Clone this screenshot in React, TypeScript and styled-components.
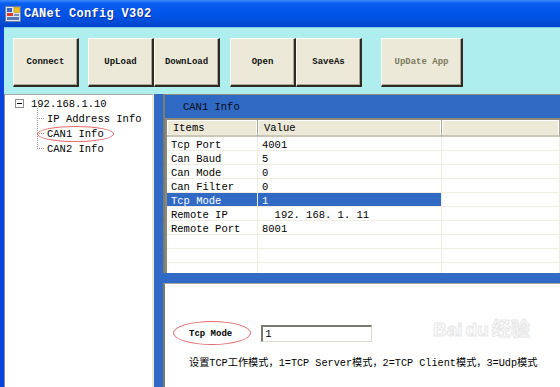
import React from 'react';
import styled, { createGlobalStyle } from 'styled-components';

const GlobalStyle = createGlobalStyle`
  html, body {
    margin: 0;
    padding: 0;
  }
  body {
    width: 560px;
    height: 387px;
    overflow: hidden;
    background: #afeeee;
    font-family: "Liberation Mono", "Noto Sans CJK SC", monospace;
    color: #000;
  }
  * {
    box-sizing: border-box;
  }
`;

const Window = styled.div`
  width: 560px;
  height: 387px;
  display: flex;
  flex-direction: column;
  overflow: hidden;
`;

const TitleBar = styled.div`
  height: 27px;
  flex: none;
  display: flex;
  align-items: center;
  gap: 3px;
  padding-left: 5px;
  background: linear-gradient(
    180deg,
    #3d8df9 0%,
    #0a5ef0 12%,
    #0056e8 45%,
    #004fdc 75%,
    #0044c6 100%
  );
`;

const TitleText = styled.span`
  font-size: 12px;
  font-weight: 700;
  color: #fff;
  text-shadow: 1px 1px 0 #0b2a9a;
  letter-spacing: 0.3px;
`;

const Frame = styled.div`
  flex: 1;
  min-height: 0;
  display: flex;
  flex-direction: column;
  border-left: 4px solid #0a44dc;
`;

const Toolbar = styled.div`
  height: 67px;
  flex: none;
  display: flex;
  align-items: flex-start;
  padding: 10px 0 0 9px;
  background: #afeeee;
  border-top: 1px solid #7ccfe8;
`;

const ToolButton = styled.button<{ $gap?: number; $width?: number; $disabled?: boolean }>`
  width: ${p => p.$width ?? 66}px;
  height: 49px;
  margin: 0 0 0 ${p => p.$gap ?? 0}px;
  padding: 0;
  background: #ece9d8;
  border-top: 1px solid #fbfaf4;
  border-left: 1px solid #fbfaf4;
  border-right: 2px solid #2f2b20;
  border-bottom: 2px solid #2f2b20;
  box-shadow: inset -1px -1px 0 #aca899;
  font-family: "Liberation Mono", monospace;
  font-size: 9px;
  font-weight: 700;
  color: ${p => (p.$disabled ? '#7c7a5c' : '#111')};
`;

const Main = styled.div`
  flex: 1;
  min-height: 0;
  display: flex;
`;

const TreePane = styled.div`
  width: 150px;
  flex: none;
  background: #fff;
  border-top: 1px solid #a6a6a6;
  border-left: 1px solid #8f8f8f;
  border-right: 2px solid #ece9d8;
  padding: 1px 0 0 5px;
  font-size: 10.5px;
`;

const TreeRow = styled.div`
  height: 15px;
  display: flex;
  align-items: center;
  white-space: nowrap;
`;

const ExpandBox = styled.span`
  width: 9px;
  height: 9px;
  margin: 0 7px 0 5px;
  border: 1px solid #8c8c8c;
  background: #fff;
  display: flex;
  align-items: center;
  justify-content: center;

  &::after {
    content: '';
    width: 5px;
    height: 1px;
    background: #000;
  }
`;

const ChildList = styled.div`
  position: relative;
  margin-left: 27px;

  &::before {
    content: '';
    position: absolute;
    left: 0;
    top: -3px;
    bottom: 7px;
    border-left: 1px dotted #9a9a9a;
  }
`;

const ChildRow = styled(TreeRow)`
  position: relative;
  padding-left: 10px;

  &::before {
    content: '';
    position: absolute;
    left: 0;
    top: 7px;
    width: 7px;
    border-top: 1px dotted #9a9a9a;
  }
`;

const NodeLabel = styled.span<{ $circled?: boolean }>`
  position: relative;

  &::after {
    content: '';
    display: ${p => (p.$circled ? 'block' : 'none')};
    position: absolute;
    left: -10px;
    right: -10px;
    top: -2px;
    bottom: -2px;
    border: 1.5px solid #e46c6c;
    border-radius: 50%;
  }
`;

const RightArea = styled.div`
  flex: 1;
  min-width: 0;
  display: flex;
  flex-direction: column;
  gap: 10px;
  padding-left: 9px;
  background: #316ac5;
`;

const TopPanel = styled.div`
  height: 179px;
  flex: none;
  display: flex;
  flex-direction: column;
  border-left: 2px solid #7d7b6c;
  border-top: 1px solid #8d8b80;
`;

const PanelHeader = styled.div`
  height: 23px;
  flex: none;
  display: flex;
  align-items: center;
  padding: 1px 0 0 18px;
  font-size: 10.5px;
  color: #0a0a14;
`;

const Grid = styled.div`
  flex: 1;
  min-height: 0;
  overflow: hidden;
  background: #fff;
  border-left: 2px solid #8c8a7c;
  border-top: 2px solid #8c8a7c;
`;

const GridRow = styled.div`
  display: grid;
  grid-template-columns: 91px 184px 1fr;
`;

const HeadCell = styled.div`
  height: 17px;
  display: flex;
  align-items: center;
  padding: 1px 0 0 6px;
  font-size: 10.5px;
  background: #ece9d8;
  border-right: 1px solid #a7a493;
  border-bottom: 2px solid #cbc7b8;
  box-shadow: inset -1px 0 0 #fff, inset 1px 1px 0 #fff;
`;

const Cell = styled.div<{ $selected?: boolean }>`
  height: 14px;
  display: flex;
  align-items: center;
  padding: 2px 0 0 4px;
  font-size: 10.5px;
  white-space: pre;
  background: ${p => (p.$selected ? '#316ac5' : '#fff')};
  color: ${p => (p.$selected ? '#fff' : '#000')};
  border-right: 1px solid #efede2;
  border-bottom: 1px solid #efede2;
`;

const BottomPanel = styled.div`
  flex: 1;
  position: relative;
  background: #fff;
  border-left: 2px solid #7d7b6c;
  border-top: 1px solid #a9a9a0;
  padding: 41px 0 0 24px;
`;

const FieldRow = styled.div`
  display: flex;
  align-items: center;
  gap: 29px;
`;

const FieldLabel = styled.span`
  position: relative;
  font-size: 9px;
  font-weight: 700;

  &::after {
    content: '';
    position: absolute;
    left: -16px;
    right: -19px;
    top: -8px;
    bottom: -6px;
    border: 1.5px solid #e46c6c;
    border-radius: 50%;
  }
`;

const FieldInput = styled.div`
  width: 111px;
  height: 17px;
  display: flex;
  align-items: center;
  padding-left: 2px;
  font-size: 10.5px;
  background: #fff;
  border-top: 2px solid #7b7a70;
  border-left: 2px solid #7b7a70;
  border-right: 1px solid #dcd9cc;
  border-bottom: 1px solid #dcd9cc;
`;

const Description = styled.div`
  margin-top: 15px;
  font-size: 10.2px;
  line-height: 14px;
  white-space: nowrap;
  font-family: "Liberation Mono", "Noto Sans CJK SC", monospace;
`;

const Watermark = styled.div`
  position: absolute;
  left: 268px;
  top: 36px;
  display: flex;
  align-items: baseline;
  gap: 3px;
  font-family: "Liberation Sans", "Noto Sans CJK SC", sans-serif;
  font-size: 19px;
  line-height: 20px;
  font-weight: 700;
  color: rgba(255, 255, 255, 0);
  -webkit-text-stroke: 1px #e6e6e6;
  pointer-events: none;
`;

const AppIcon = () => (
  <svg width="16" height="16" viewBox="0 0 16 16">
    <rect x="0.5" y="0.5" width="15" height="15" fill="#dfe6f2" stroke="#6a7fa8" />
    <rect x="2" y="2" width="5" height="4" fill="#3a63c8" />
    <rect x="9" y="1.5" width="5.5" height="5" fill="#f2c21c" stroke="#b88a10" strokeWidth="0.6" />
    <rect x="2" y="7" width="6" height="3" fill="#e23a2a" />
    <rect x="9" y="8" width="5" height="2" fill="#7a8fb8" />
    <rect x="2" y="11" width="12" height="3" fill="#5a78b8" />
  </svg>
);

const rows = [
  { item: 'Tcp Port', value: '4001' },
  { item: 'Can Baud', value: '5' },
  { item: 'Can Mode', value: '0' },
  { item: 'Can Filter', value: '0' },
  { item: 'Tcp Mode', value: '1', selected: true },
  { item: 'Remote IP', value: '  192. 168. 1. 11' },
  { item: 'Remote Port', value: '8001' },
  { item: '', value: '' },
  { item: '', value: '' },
  { item: '', value: '' },
];

const App: React.FC = () => {
  return (
    <>
      <GlobalStyle />
      <Window>
        <TitleBar>
          <AppIcon />
          <TitleText>CANet Config V302</TitleText>
        </TitleBar>
        <Frame>
          <Toolbar>
            <ToolButton>Connect</ToolButton>
            <ToolButton $gap={9}>UpLoad</ToolButton>
            <ToolButton>DownLoad</ToolButton>
            <ToolButton $gap={10}>Open</ToolButton>
            <ToolButton>SaveAs</ToolButton>
            <ToolButton $gap={19} $width={82} $disabled>
              UpDate App
            </ToolButton>
          </Toolbar>
          <Main>
            <TreePane>
              <TreeRow>
                <ExpandBox />
                <NodeLabel>192.168.1.10</NodeLabel>
              </TreeRow>
              <ChildList>
                <ChildRow>
                  <NodeLabel>IP Address Info</NodeLabel>
                </ChildRow>
                <ChildRow>
                  <NodeLabel $circled>CAN1 Info</NodeLabel>
                </ChildRow>
                <ChildRow>
                  <NodeLabel>CAN2 Info</NodeLabel>
                </ChildRow>
              </ChildList>
            </TreePane>
            <RightArea>
              <TopPanel>
                <PanelHeader>CAN1 Info</PanelHeader>
                <Grid>
                  <GridRow>
                    <HeadCell>Items</HeadCell>
                    <HeadCell>Value</HeadCell>
                    <HeadCell />
                  </GridRow>
                  {rows.map((r, i) => (
                    <GridRow key={i}>
                      <Cell $selected={r.selected}>{r.item}</Cell>
                      <Cell $selected={r.selected}>{r.value}</Cell>
                      <Cell />
                    </GridRow>
                  ))}
                </Grid>
              </TopPanel>
              <BottomPanel>
                <FieldRow>
                  <FieldLabel>Tcp Mode</FieldLabel>
                  <FieldInput>1</FieldInput>
                </FieldRow>
                <Description>
                  设置TCP工作模式，1=TCP Server模式，2=TCP Client模式，3=Udp模式
                </Description>
                <Watermark>
                  <span>Bai</span>
                  <span>du</span>
                  <span>经验</span>
                </Watermark>
              </BottomPanel>
            </RightArea>
          </Main>
        </Frame>
      </Window>
    </>
  );
};

export default App;
